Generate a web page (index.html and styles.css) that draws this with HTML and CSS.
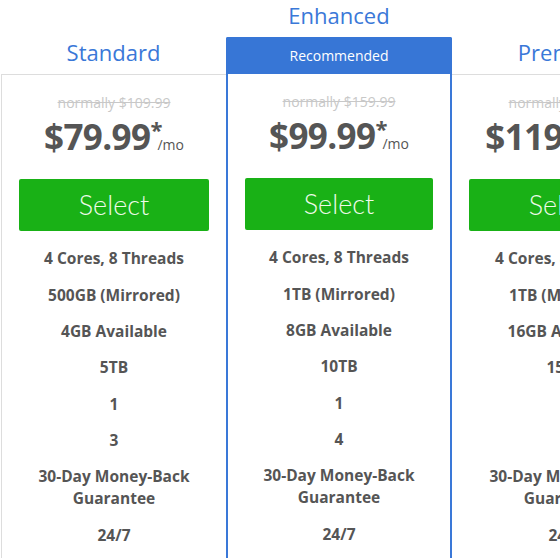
FILE: index.html
```html
<!DOCTYPE html>
<html>
<head>
<meta charset="utf-8">
<link rel="stylesheet" href="styles.css">
</head>
<body>
<div class="plans">
  <div class="plan">
    <div class="title tall">Standard</div>
    <div class="card">
      <div class="normally">normally $109.99</div>
      <div class="price"><span class="amt">$79.99</span><span class="sup">*</span><span class="mo">/mo</span></div>
      <div class="btn">Select</div>
      <ul class="feats">
        <li>4 Cores, 8 Threads</li>
        <li>500GB (Mirrored)</li>
        <li>4GB Available</li>
        <li>5TB</li>
        <li>1</li>
        <li>3</li>
        <li>30-Day Money-Back<br>Guarantee</li>
        <li>24/7</li>
      </ul>
    </div>
  </div>
  <div class="plan featured">
    <div class="title short">Enhanced</div>
    <div class="card">
      <div class="ribbon">Recommended</div>
      <div class="normally">normally $159.99</div>
      <div class="price"><span class="amt">$99.99</span><span class="sup">*</span><span class="mo">/mo</span></div>
      <div class="btn">Select</div>
      <ul class="feats">
        <li>4 Cores, 8 Threads</li>
        <li>1TB (Mirrored)</li>
        <li>8GB Available</li>
        <li>10TB</li>
        <li>1</li>
        <li>4</li>
        <li>30-Day Money-Back<br>Guarantee</li>
        <li>24/7</li>
      </ul>
    </div>
  </div>
  <div class="plan last">
    <div class="title tall">Premium</div>
    <div class="card">
      <div class="normally">normally $199.99</div>
      <div class="price"><span class="amt">$119.99</span><span class="sup">*</span><span class="mo">/mo</span></div>
      <div class="btn">Select</div>
      <ul class="feats">
        <li>4 Cores, 8 Threads</li>
        <li>1TB (Mirrored)</li>
        <li>16GB Available</li>
        <li>15TB</li>
        <li>1</li>
        <li>5</li>
        <li>30-Day Money-Back<br>Guarantee</li>
        <li>24/7</li>
      </ul>
    </div>
  </div>
</div>
</body>
</html>
```
FILE: styles.css
```css
html, body {
  margin: 0;
  padding: 0;
  background: #fff;
  overflow: hidden;
}
body {
  font-family: "Open Sans", "Liberation Sans", sans-serif;
  color: #555;
}
.plans {
  display: flex;
  align-items: flex-end;
  width: 700px;
  height: 558px;
  margin-left: 1px;
  overflow: hidden;
}
.plan {
  display: flex;
  flex-direction: column;
  height: 558px;
  flex: none;
}
.plan:first-child { width: 225px; }
.plan.featured { width: 226px; }
.plan.last { width: 226px; }
.title {
  color: #3a78d8;
  font-size: 22px;
  text-align: center;
  display: flex;
  align-items: flex-end;
  justify-content: center;
  box-sizing: border-box;
  white-space: nowrap;
}
.title.tall { height: 74px; padding-bottom: 7px; }
.title.short { height: 37px; padding-bottom: 7px; }
.card {
  flex: 1;
  border-top: 1px solid #ddd;
  border-left: 1px solid #ddd;
  display: flex;
  flex-direction: column;
}
.plan.last .card { border-left: none; }
.featured .card {
  border: 2px solid #3a78d8;
  border-bottom: none;
  border-top: none;
  border-radius: 2px 2px 0 0;
}
.ribbon {
  background: #3776d6;
  color: #fff;
  font-size: 14px;
  height: 37px;
  line-height: 38px;
  text-align: center;
  margin: 0 -2px;
  border-radius: 2px 2px 0 0;
}
.normally {
  color: #c8c8c8;
  text-decoration: line-through;
  font-size: 14px;
  text-align: center;
  margin-top: 18px;
  line-height: 20px;
  white-space: nowrap;
}
.price {
  text-align: center;
  font-weight: 700;
  line-height: 44px;
  height: 44px;
  margin-top: 2px;
  white-space: nowrap;
}
.amt { font-size: 35px; letter-spacing: -0.6px; }
.sup { font-size: 22px; vertical-align: 12px; line-height: 0; }
.mo { font-size: 14px; font-weight: 400; margin-left: -5px; }
.btn {
  margin: 20px 17px 0 17px;
  height: 52px;
  line-height: 52px;
  background: #19b116;
  border-radius: 2px;
  color: #effbea;
  font-family: Lato, "Open Sans", sans-serif;
  font-weight: 300;
  font-size: 27px;
  text-align: center;
}
.plan.last .btn { margin-right: 0; width: 190px; }
.feats {
  list-style: none;
  margin: 9px 0 0 0;
  padding: 0;
}
.feats li {
  font-size: 15.5px;
  font-weight: 700;
  line-height: 22px;
  padding: 7.2px 0;
  text-align: center;
  white-space: nowrap;
}
```
